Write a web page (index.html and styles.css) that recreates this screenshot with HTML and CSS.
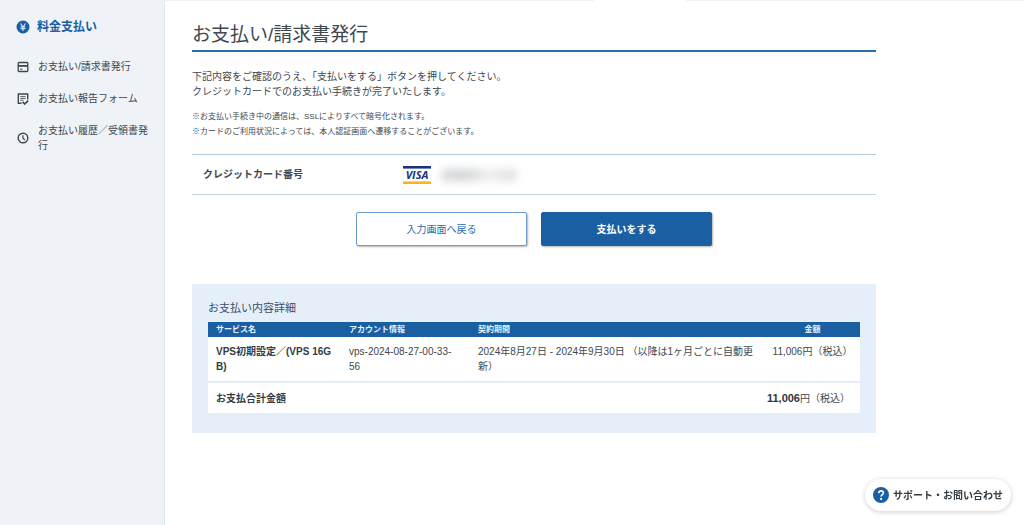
FILE: index.html
```html
<!DOCTYPE html>
<html lang="ja">
<head>
<meta charset="utf-8">
<meta name="viewport" content="width=device-width, initial-scale=1">
<title>お支払い/請求書発行</title>
<link rel="stylesheet" href="styles.css">
</head>
<body>
<div class="top-edge"><span class="top-tab"></span></div>
<div class="layout">
  <nav class="sidebar" aria-label="料金支払い">
    <h2 class="sidebar-title">
      <svg class="title-icon" viewBox="0 0 14 14" aria-hidden="true"><circle cx="7" cy="7" r="6.5" fill="#1b5fa3"/><path d="M4.5 3.5 7 7l2.5-3.5M7 7v3.9M4.6 6.9h4.8M4.6 8.7h4.8" fill="none" stroke="#cfe2f5" stroke-width="1.2"/></svg>
      料金支払い
    </h2>
    <ul class="menu">
      <li><a class="menu-link" href="#">
        <svg class="menu-icon" viewBox="0 0 12 12" aria-hidden="true"><rect x="1.2" y="1.5" width="9.6" height="9" rx=".8" fill="none" stroke="currentColor" stroke-width="1.3"/><path d="M1 4.9h10" stroke="currentColor" stroke-width="1.8"/><path d="M3 8.2h2.4" stroke="currentColor"/></svg>
        <span>お支払い/請求書発行</span></a></li>
      <li><a class="menu-link" href="#">
        <svg class="menu-icon" viewBox="0 0 12 12" aria-hidden="true"><path d="M4.6 10.2H1.3V1h9.4v5.6" fill="none" stroke="currentColor" stroke-width="1.4"/><path d="M3.2 3.6h5.4M3.2 5.4h5.4M3.2 7.2h3.4" stroke="currentColor" stroke-width=".8"/><path d="m5.6 8.9 2.1 2.1 3.5-3.4" fill="none" stroke="currentColor" stroke-width="1.7"/></svg>
        <span>お支払い報告フォーム</span></a></li>
      <li><a class="menu-link" href="#">
        <svg class="menu-icon" viewBox="0 0 12 12" aria-hidden="true"><circle cx="6" cy="6" r="4.8" fill="none" stroke="currentColor" stroke-width="1.4"/><path d="M5.9 3.2V6l1.9 2" fill="none" stroke="currentColor" stroke-width="1.2"/></svg>
        <span>お支払い履歴／受領書発行</span></a></li>
    </ul>
  </nav>
  <main class="main">
    <div class="content">
      <h1 class="page-title">お支払い/請求書発行</h1>
      <p class="lead">下記内容をご確認のうえ、「支払いをする」ボタンを押してください。<br>クレジットカードでのお支払い手続きが完了いたします。</p>
      <p class="notes">※お支払い手続き中の通信は、SSLによりすべて暗号化されます。<br>※カードのご利用状況によっては、本人認証画面へ遷移することがございます。</p>
      <dl class="card-row">
        <dt class="card-label">クレジットカード番号</dt>
        <dd class="card-value">
          <svg class="visa" viewBox="0 0 28 18" role="img" aria-label="VISA"><path d="M0 0h28v2.6H0z" fill="#19347f"/><path d="M0 15.4h28V18H0z" fill="#f8b41b"/><text class="visa-text" x="14" y="12.6" text-anchor="middle">VISA</text></svg>
          <span class="masked"></span>
        </dd>
      </dl>
      <div class="actions">
        <button class="btn btn-outline" type="button">入力画面へ戻る</button>
        <button class="btn btn-primary" type="button">支払いをする</button>
      </div>
      <section class="detail">
        <h2 class="detail-title">お支払い内容詳細</h2>
        <table class="detail-table">
          <colgroup><col class="col-service"><col class="col-account"><col class="col-term"><col class="col-price"></colgroup>
          <thead>
            <tr><th scope="col">サービス名</th><th scope="col">アカウント情報</th><th scope="col">契約期間</th><th scope="col" class="price">金額</th></tr>
          </thead>
          <tbody>
            <tr><th scope="row">VPS初期設定／(VPS 16GB)</th><td class="account">vps-2024-08-27-00-33-56</td><td>2024年8月27日 - 2024年9月30日 （以降は1ヶ月ごとに自動更新）</td><td class="price">11,006円（税込）</td></tr>
            <tr class="total"><th scope="row" colspan="2">お支払合計金額</th><td colspan="2" class="total-price"><strong>11,006</strong>円（税込）</td></tr>
          </tbody>
        </table>
      </section>
    </div>
  </main>
</div>
<button class="support" type="button">
  <svg class="support-icon" viewBox="0 0 16 16" aria-hidden="true"><circle cx="8" cy="8" r="8" fill="#1b5fa3"/><path d="M5.7 6.1c.2-3 4.9-2.8 4.7-.1-.1 1.6-2.3 1.7-2.3 3.5" fill="none" stroke="#fff" stroke-width="1.7"/><circle cx="8.1" cy="11.9" r="1.1" fill="#fff"/></svg>
  サポート・お問い合わせ
</button>
</body>
</html>
```
FILE: styles.css
```css
* {
  box-sizing: border-box;
}

body {
  display: flex;
  flex-direction: column;
  min-height: 100vh;
  margin: 0;
  background: #fff;
  color: #40484f;
  font: 10px/15px "Liberation Sans", "Noto Sans CJK JP", sans-serif;
}

h1,
h2,
p,
ul,
dl,
dd {
  margin: 0;
  padding: 0;
}

.top-edge {
  display: flex;
  height: 1px;
  padding-left: 58%;
  background: #f1f1f1;
}

.top-tab {
  width: 92px;
  background: #fff;
}

.layout {
  display: flex;
  flex: 1;
}

.sidebar {
  flex: 0 0 165px;
  padding: 17px 16px;
  background: #eff3f7;
  border-right: 1px solid #e2e7ec;
}

.sidebar-title {
  display: flex;
  align-items: center;
  gap: 7px;
  margin-bottom: 23px;
  color: #1b5fa3;
  font-size: 12px;
  line-height: 18px;
}

.title-icon {
  width: 14px;
  height: 14px;
}

.menu {
  display: flex;
  flex-direction: column;
  gap: 17px;
  list-style: none;
}

.menu-link {
  display: flex;
  align-items: center;
  gap: 9px;
  padding-left: 1px;
  color: inherit;
  text-decoration: none;
}

.menu-icon {
  flex: none;
  width: 12px;
  height: 12px;
}

.main {
  flex: 1;
  min-width: 0;
  padding: 20px 27px 32px;
}

.content {
  max-width: 684px;
}

.page-title {
  padding-bottom: 1px;
  border-bottom: 2px solid #2b6caf;
  font-size: 19px;
  font-weight: 400;
  line-height: 28px;
}

.lead {
  margin-top: 17px;
}

.notes {
  margin-top: 10px;
  font-size: 8px;
}

.card-row {
  display: flex;
  align-items: center;
  margin-top: 15px;
  min-height: 41px;
  border-top: 1px solid #b5c9dc;
  border-bottom: 1px solid #c5d6e6;
}

.card-label {
  flex: 0 0 211px;
  padding-left: 11px;
  font-weight: 700;
}

.card-value {
  display: flex;
  align-items: center;
  gap: 10px;
}

.visa {
  width: 28px;
  height: 18px;
}

.visa-text {
  fill: #19347f;
  font: italic 700 11px "Open Sans", sans-serif;
}

.masked {
  width: 76px;
  height: 12px;
  background: linear-gradient(90deg, #d5d8da, #d2d5d8 35%, #eceeef 60%, #dcdee0);
  border-radius: 5px;
  filter: blur(4px);
}

.actions {
  display: flex;
  justify-content: center;
  gap: 14px;
  margin-top: 17px;
}

.btn {
  width: 171px;
  height: 34px;
  border: 1px solid #1b5fa3;
  border-radius: 2px;
  box-shadow: 1px 1px 2px rgba(0, 0, 0, 0.3);
  font: inherit;
}

.btn-outline {
  border-color: #6b9bcf;
  background: #fff;
  color: #2b6caf;
}

.btn-primary {
  background: #1b5fa3;
  color: #fff;
  font-weight: 700;
}

.detail {
  margin-top: 38px;
  padding: 16px 16px 20px;
  background: #e5effa;
}

.detail-title {
  margin-bottom: 6px;
  color: #3a5068;
  font-size: 11px;
  font-weight: 400;
  line-height: 16px;
}

.detail-table {
  width: 100%;
  table-layout: fixed;
  border-collapse: collapse;
  background: #fff;
}

.col-service {
  width: 133px;
}

.col-account {
  width: 129px;
}

.col-price {
  width: 95px;
}

.detail-table th,
.detail-table td {
  padding: 7px 8px;
  text-align: left;
  vertical-align: top;
  word-break: break-all;
}

.detail-table thead th {
  padding-top: 0;
  padding-bottom: 0;
  background: #1b5fa3;
  color: #e8f1fa;
  font-size: 8px;
}

.detail-table tbody th {
  color: #343c43;
}

.detail-table .account {
  padding-right: 12px;
  word-break: normal;
}

.detail-table .price {
  padding-left: 0;
  padding-right: 0;
  text-align: center;
}

.total {
  border-top: 2px solid #e5eef6;
}

.detail-table .total th,
.detail-table .total td {
  padding-top: 8px;
}

.detail-table .total-price {
  padding-right: 10px;
  text-align: right;
}

.total-price strong {
  color: #30383f;
  font-size: 11px;
}

.support {
  position: fixed;
  right: 13px;
  bottom: 14px;
  display: flex;
  align-items: center;
  gap: 4px;
  height: 32px;
  padding: 0 8px;
  border: 0;
  border-radius: 16px;
  background: #fff;
  box-shadow: 0 1px 5px rgba(0, 0, 0, 0.2);
  color: #343c43;
  font: inherit;
  font-weight: 700;
}

.support-icon {
  width: 16px;
  height: 16px;
}
```
